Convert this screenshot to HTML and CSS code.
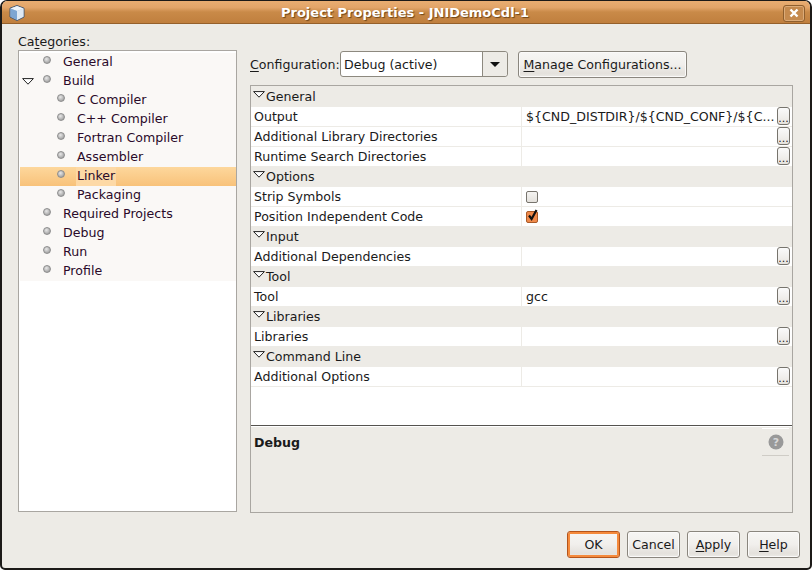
FILE: index.html
```html
<!DOCTYPE html>
<html lang="en">
<head>
<meta charset="utf-8">
<title>Project Properties - JNIDemoCdl-1</title>
<link rel="stylesheet" href="styles.css">
</head>
<body>
<div class="window">
  <header class="titlebar">
    <svg class="app-icon" width="16" height="16" viewBox="0 0 16 16">
      <path d="M8 .5 15 3.2V12L8 15.5 1 12V3.2Z" fill="#a9c4e2" stroke="#44566c" stroke-linejoin="round"/>
      <path d="M1.5 3.4 8 6 14.5 3.4 8 1Z" fill="#eef4fa"/>
      <path d="M8 6V15L14.5 11.7V3.4Z" fill="#dfe9f3"/>
      <path d="M1.5 3.4 8 6V15L1.5 11.7Z" fill="#7ea6d2"/>
    </svg>
    <span class="title">Project Properties - JNIDemoCdl-1</span>
    <span class="close">
      <svg width="10" height="10" viewBox="0 0 10 10"><path d="M1.5 1.5 8.5 8.5M8.5 1.5 1.5 8.5" stroke="#fff" stroke-width="2.4"/></svg>
    </span>
  </header>
  <main class="content">
    <section class="left">
      <div class="cat-label">Ca<u>t</u>egories:</div>
      <div class="tree">
        <ul class="tree-list">
          <li class="node lvl1"><i class="bullet"></i>General</li>
          <li class="node lvl1"><svg class="expander" width="12" height="7" viewBox="0 0 12 7"><path d="M.6.6H11.4L6 6.2Z" fill="#fff" stroke="#222"/></svg><i class="bullet"></i>Build</li>
          <li class="node lvl2"><i class="bullet"></i>C Compiler</li>
          <li class="node lvl2"><i class="bullet"></i>C++ Compiler</li>
          <li class="node lvl2"><i class="bullet"></i>Fortran Compiler</li>
          <li class="node lvl2"><i class="bullet"></i>Assembler</li>
          <li class="node lvl2 selected"><i class="bullet"></i><span class="sel-text">Linker</span></li>
          <li class="node lvl2"><i class="bullet"></i>Packaging</li>
          <li class="node lvl1"><i class="bullet"></i>Required Projects</li>
          <li class="node lvl1"><i class="bullet"></i>Debug</li>
          <li class="node lvl1"><i class="bullet"></i>Run</li>
          <li class="node lvl1"><i class="bullet"></i>Profile</li>
        </ul>
      </div>
    </section>
    <section class="right">
      <div class="config-row">
        <span class="config-label"><u>C</u>onfiguration:</span>
        <div class="combo"><span class="combo-value">Debug (active)</span><span class="combo-arrow"><svg width="10" height="5" viewBox="0 0 10 5"><path d="M0 0H10L5 5Z" fill="#111"/></svg></span></div>
        <button class="btn manage"><u>M</u>anage Configurations...</button>
      </div>
      <div class="sheet">
        <div class="props">
          <div class="group first"><svg class="tri" width="12" height="7" viewBox="0 0 12 7"><path d="M.6.6H11.4L6 6.2Z" fill="#fff" stroke="#222"/></svg>General</div>
          <div class="prop"><span class="k">Output</span><span class="v"><span class="val">${CND_DISTDIR}/${CND_CONF}/${C...</span><button class="dots">...</button></span></div>
          <div class="prop"><span class="k">Additional Library Directories</span><span class="v"><span class="val"></span><button class="dots">...</button></span></div>
          <div class="prop"><span class="k">Runtime Search Directories</span><span class="v"><span class="val"></span><button class="dots">...</button></span></div>
          <div class="group"><svg class="tri" width="12" height="7" viewBox="0 0 12 7"><path d="M.6.6H11.4L6 6.2Z" fill="#fff" stroke="#222"/></svg>Options</div>
          <div class="prop"><span class="k">Strip Symbols</span><span class="v"><i class="check"></i></span></div>
          <div class="prop"><span class="k">Position Independent Code</span><span class="v"><i class="check on"><svg width="14" height="14" viewBox="0 0 14 14"><path d="M3 6.5 5.6 10 10.5 1" fill="none" stroke="#111" stroke-width="2.2"/></svg></i></span></div>
          <div class="group"><svg class="tri" width="12" height="7" viewBox="0 0 12 7"><path d="M.6.6H11.4L6 6.2Z" fill="#fff" stroke="#222"/></svg>Input</div>
          <div class="prop"><span class="k">Additional Dependencies</span><span class="v"><span class="val"></span><button class="dots">...</button></span></div>
          <div class="group"><svg class="tri" width="12" height="7" viewBox="0 0 12 7"><path d="M.6.6H11.4L6 6.2Z" fill="#fff" stroke="#222"/></svg>Tool</div>
          <div class="prop"><span class="k">Tool</span><span class="v"><span class="val">gcc</span><button class="dots">...</button></span></div>
          <div class="group"><svg class="tri" width="12" height="7" viewBox="0 0 12 7"><path d="M.6.6H11.4L6 6.2Z" fill="#fff" stroke="#222"/></svg>Libraries</div>
          <div class="prop"><span class="k">Libraries</span><span class="v"><span class="val"></span><button class="dots">...</button></span></div>
          <div class="group"><svg class="tri" width="12" height="7" viewBox="0 0 12 7"><path d="M.6.6H11.4L6 6.2Z" fill="#fff" stroke="#222"/></svg>Command Line</div>
          <div class="prop"><span class="k">Additional Options</span><span class="v"><span class="val"></span><button class="dots">...</button></span></div>
        </div>
        <div class="desc">
          <strong class="desc-title">Debug</strong>
          <div class="help-box"><svg width="16" height="16" viewBox="0 0 16 16"><circle cx="8" cy="8" r="7.5" fill="#999"/><text x="8" y="12" class="help-q">?</text></svg></div>
        </div>
      </div>
    </section>
  </main>
  <footer class="actions">
    <button class="btn act default">OK</button>
    <button class="btn act">Cancel</button>
    <button class="btn act"><u>A</u>pply</button>
    <button class="btn act"><u>H</u>elp</button>
  </footer>
</div>
</body>
</html>
```
FILE: styles.css
```css
* { box-sizing: border-box; }
html, body { margin: 0; padding: 0; height: 100%; overflow: hidden; background: #fff; }
body { font: 12.6px/1 "DejaVu Sans", sans-serif; color: #1a1a1a; }
u { text-underline-offset: 2px; text-decoration-thickness: 1px; }
.window {
  width: 812px; height: 570px; display: flex; flex-direction: column;
  background: #edebe6; border: 2px solid #1c1a18; border-top-width: 1px; border-radius: 7px 7px 5px 5px; overflow: hidden;
}
.titlebar {
  height: 23px; flex: none; display: flex; align-items: center; position: relative;
  background: linear-gradient(#e9ad72 0, #e2a468 30%, #c98a48 50%, #c07f3e 100%);
  border-bottom: 1px solid #95602b;
}
.app-icon { margin-left: 7px; margin-top: 2px; }
.title {
  position: absolute; left: 279px; top: 4px;
  font-weight: bold; font-size: 13px; line-height: 15px; color: #fff; text-shadow: 1px 1px 1px #6e4518;
}
.close {
  margin-left: auto; margin-right: 5px; margin-top: 2px; width: 22px; height: 17px; display: flex; align-items: center; justify-content: center;
  border: 1px solid #8f5f2e; border-radius: 3px; box-shadow: inset 0 0 0 1px #dcab78; background: #c58a4e;
}
.content { flex: 1; display: flex; padding: 0 17px 0 16px; gap: 13px; min-height: 0; }
.left { width: 219px; flex: none; display: flex; flex-direction: column; }
.cat-label { height: 26px; padding-top: 10px; line-height: 15px; }
.tree { height: 463px; background: #fff; border: 1px solid #a9a6a1; padding: 2px 0 0 1px; }
.tree-list { margin: 0; padding: 0; list-style: none; background: #faf8f6; }
.node { height: 19px; line-height: 18px; position: relative; display: flex; align-items: center; color: #2a0a2a; }
.lvl1 { padding-left: 23px; }
.lvl2 { padding-left: 37px; }
.bullet {
  width: 8px; height: 8px; border-radius: 50%; margin-right: 12px; margin-top: -4px; flex: none;
  background: radial-gradient(circle at 40% 35%, #e8e8e8, #a0a0a0 80%); border: 1px solid #8d8d8d;
}
.expander { position: absolute; left: 2px; top: 6px; }
.selected { background: linear-gradient(#fdd79c, #f8c27a); }
.sel-text { background: #fdd9a6; margin-left: -1px; padding: 0 1px; height: 19px; line-height: 18px; }
.right { flex: 1; min-width: 0; display: flex; flex-direction: column; }
.config-row { height: 61px; flex: none; display: flex; padding-top: 26px; align-items: flex-start; }
.config-label { margin-top: 7px; width: 90px; line-height: 15px; white-space: nowrap; }
.combo {
  width: 168px; height: 26px; margin-top: 1px; display: flex; background: #fff; border: 1px solid #8d897f; border-radius: 3px;
}
.combo-value { flex: 1; padding: 5px 0 0 3px; line-height: 15px; }
.combo-arrow { width: 25px; display: flex; align-items: center; justify-content: center; border-left: 1px solid #8d897f; background: #edebe6; border-radius: 0 3px 3px 0; }
.btn {
  font: inherit; color: #1a1a1a; padding: 1px 0 0; background: linear-gradient(#f7f6f4 0, #f1efec 50%, #e4e1dc 85%, #ecebe7 100%);
  border: 1px solid #8a867e; border-radius: 3px; box-shadow: inset 0 0 0 1px #fbfaf9;
}
.manage { width: 169px; height: 27px; margin-left: 10px; margin-top: 1px; }
.sheet { width: 543px; height: 428px; flex: none; display: flex; flex-direction: column; border: 1px solid #a9a6a1; }
.props { height: 340px; flex: none; background: #fff; border-bottom: 1px solid #55534f; }
.group { height: 20px; line-height: 18px; padding-bottom: 1px; background: #edebe6; padding-left: 2px; display: flex; align-items: center; color: #1a1a1a; }
.group.first { height: 21px; padding-bottom: 0; }
.tri { margin-right: 1px; margin-top: -5px; }
.prop { height: 20px; display: flex; border-bottom: 1px solid #edebe6; line-height: 19px; }
.k { width: 271px; flex: none; padding-left: 3px; border-right: 1px solid #edebe6; }
.v { flex: 1; display: flex; align-items: center; padding-left: 4px; min-width: 0; }
.val { flex: 1; white-space: nowrap; overflow: hidden; }
.dots {
  width: 13px; height: 18px; margin-right: 2px; margin-top: -1px; padding: 6px 0 0; font: 11px/10px "DejaVu Sans", sans-serif; color: #222; flex: none;
  background: linear-gradient(#fafafa, #efedea 65%, #e4e1dc); border: 1px solid #77746d; border-radius: 3px;
}
.check {
  width: 12px; height: 12px; margin-left: 0; position: relative; flex: none; border: 1px solid #77746d; border-radius: 2px;
  background: linear-gradient(#f4f3f1, #e4e1dc); display: block;
}
.check.on { background: #f08a4b; border-color: #a85a28; }
.check svg { position: absolute; left: -1px; top: -3px; }
.desc { flex: 1; background: #edebe6; display: flex; justify-content: space-between; padding: 1px 3px 0 3px; border-top: 1px solid #fff; }
.desc-title { font-weight: bold; margin-top: 7px; line-height: 15px; }
.help-box { width: 27px; height: 28px; border-top: 1px solid #fff; border-bottom: 1px solid #cfccc6; display: flex; align-items: center; justify-content: center; }
.help-q { font: bold 11px "DejaVu Sans", sans-serif; fill: #d6d6d6; text-anchor: middle; }
.actions { height: 56px; flex: none; display: flex; justify-content: flex-end; gap: 7px; padding: 19px 10px 0 0; }
.act { width: 53px; height: 27px; }
.default { border-color: #b5541a; box-shadow: inset 0 0 0 2px #f58a3c; }
```
